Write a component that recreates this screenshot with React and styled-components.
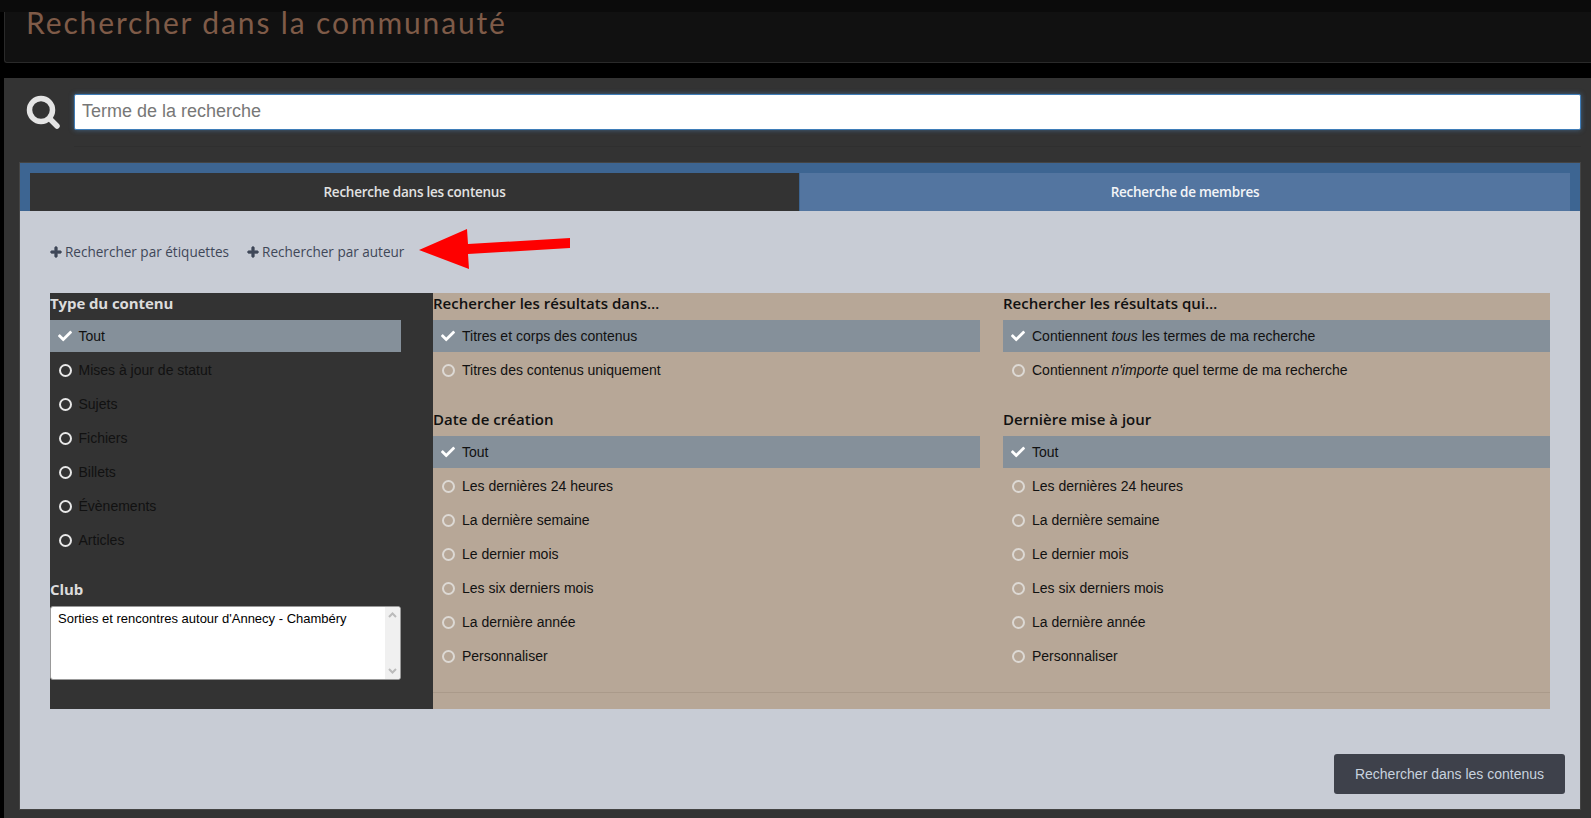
import React from 'react';
import styled, { createGlobalStyle } from 'styled-components';
import { FaCheck, FaPlus } from 'react-icons/fa';

const Global = createGlobalStyle`
  html, body { margin: 0; padding: 0; background: #000; height: 818px; overflow: hidden; }
  * { box-sizing: border-box; }
`;
const HEAD = `"Open Sans", "Noto Sans", sans-serif`;
const BODY = `"Liberation Sans", Arial, sans-serif`;

const TopBand = styled.div`height: 12px; background: #0b0b0b;`;
const HeaderPanel = styled.header`
  display: flow-root;
  margin-left: 4px; height: 51px; background: #111;
  border: 1px solid #2a2a2a; border-width: 0 0 1px 1px; border-bottom-left-radius: 3px;
`;
const Title = styled.h1`
  margin: -8px 0 0 21px; font: 400 30px/36px Lato, sans-serif; letter-spacing: 1.87px; color: #7f5b48;
`;
const Main = styled.main`
  margin: 15px 0 0 4px; background: #333; padding: 16px 11px 0 16px; height: 740px;
`;
const SearchRow = styled.div`display: flex; align-items: center; gap: 14px; padding-left: 6px; height: 36px;`;
const SearchIcon = styled.svg`width: 34px; height: 34px; flex: none; fill: none; stroke: #e4e4e4; stroke-width: 5.5; stroke-linecap: round;`;
const SearchInput = styled.input`
  flex: 1; height: 36px; padding: 0 7px 2px; margin-right: -1px; border: 1px solid #3f7db8; border-radius: 2px; background: #fff;
  font: 18px ${BODY}; box-shadow: 0 0 5px rgba(80,140,200,.55); outline: none;
  &::placeholder { color: #777; }
`;
const Divider = styled.div`margin: 16px -1px 16px 54px; height: 1px; background: #2f2f2f;`;
const BluePanel = styled.section`background: #3d6592; box-shadow: 0 0 0 1px #444;`;
const TabBar = styled.div`display: flex; padding: 10px 10px 0;`;
const Tab = styled.div`
  height: 38px; display: flex; align-items: center; justify-content: center;
  font: 600 13.5px ${HEAD}; letter-spacing: -.25px;
  flex: ${p => p.$active ? '0 0 769px' : '1'};
  color: ${p => p.$active ? '#e2e2e2' : '#f2f4f7'};
  background: ${p => p.$active ? '#333' : '#5375a0'};
  border-left: ${p => p.$active ? '0' : '1px solid #3d6592'};
`;
const Content = styled.div`position: relative; background: #c8ccd5; padding: 0 30px 15px; height: 598px;`;
const LinkRow = styled.div`display: flex; gap: 18px; height: 82px; padding-top: 32px; color: #3f4758; font: 13.55px ${HEAD};`;
const AddLink = styled.a`display: inline-flex; align-items: center; gap: 3px; height: 17px;`;
const PlusIcon = styled(FaPlus)`width: 12px; height: 12px; stroke: currentColor; stroke-width: 40;`;
const Arrow = styled.svg`position: absolute; left: 399px; top: 17px; width: 152px; height: 41px;`;
const Columns = styled.div`display: flex; height: 416px;`;
const DarkCol = styled.div`width: 383px; flex: none; padding-right: 32px; background: #333;`;
const TanCol = styled.div`
  flex: 1; background: #b7a797;
  display: grid; grid-template-columns: 547px 547px; justify-content: space-between; align-content: start;
`;
const TanStack = styled.div`display: flex; flex-direction: column;`;
const TanRule = styled.div`grid-column: 1 / 3; height: 1px; background: #aa9a8a; margin-top: 18px;`;
const Heading = styled.h3`
  margin: 0; height: 27px; font: ${p => p.$dark ? 700 : 600} 15px/21px ${HEAD}; letter-spacing: ${p => p.$dark ? '-.1px' : '.03px'};
  color: ${p => p.$dark ? '#dcdcdc' : '#111'};
  ${p => p.$gap ? 'margin-top: 21px;' : ''}
  ${p => p.$club ? 'margin-top: 19px; height: 31px; line-height: 28px;' : ''}
`;
const Row = styled.div`
  height: 32px; margin-bottom: 2px; display: flex; align-items: center; padding-left: 8px; gap: ${p => p.$dark ? '6.5px' : '7px'};
  font: 14px ${BODY}; color: #111;
  background: ${p => p.$on ? '#85909a' : 'transparent'};
`;
const IconSlot = styled.span`width: 14px; flex: none; display: flex; align-items: center; justify-content: center;`;
const CheckIcon = styled(FaCheck)`width: 14px; height: 14px; color: #fff;`;
const RadioIcon = styled.span`
  width: 13px; height: 13px; border-radius: 50%; border: 2.5px solid ${p => p.$dark ? '#e8e8e8' : '#ddd9d4'};
`;
const ListBox = styled.div`
  height: 74px; background: #fff; border: 1px solid #999; border-radius: 3px; display: flex; overflow: hidden;
`;
const ListText = styled.div`flex: 1; padding: 4px 7px; font: 13px/1.2 ${BODY}; color: #000;`;
const ScrollBar = styled.div`
  width: 15px; background: #f0f0f0; display: flex; flex-direction: column; justify-content: space-between; align-items: center; padding: 5px 0;
`;
const ScrollArrow = styled.svg`width: 9px; height: 6px; fill: none; stroke: #bbb; stroke-width: 2;`;
const Footer = styled.div`display: flex; justify-content: flex-end; margin: 45px -15px 0 0;`;
const Submit = styled.button`
  width: 231px; height: 40px; border: 0; border-radius: 3px; background: #3e414b; color: #c8d2de; font: 14px ${BODY};
`;

const Opt = ({ on, dark, children }) => (
  <Row $on={on} $dark={dark}>
    <IconSlot>{on ? <CheckIcon /> : <RadioIcon $dark={dark} />}</IconSlot>
    <span>{children}</span>
  </Row>
);
const dates = ['Les dernières 24 heures', 'La dernière semaine', 'Le dernier mois', 'Les six derniers mois', 'La dernière année', 'Personnaliser'];
const types = ['Mises à jour de statut', 'Sujets', 'Fichiers', 'Billets', 'Évènements', 'Articles'];

const DateGroup = ({ title }) => (
  <>
    <Heading $gap>{title}</Heading>
    <Opt on>Tout</Opt>
    {dates.map(d => <Opt key={d}>{d}</Opt>)}
  </>
);

export default function App() {
  return (
    <>
      <Global />
      <TopBand />
      <HeaderPanel><Title>Rechercher dans la communauté</Title></HeaderPanel>
      <Main>
        <SearchRow>
          <SearchIcon viewBox="0 0 34 34">
            <circle cx="15" cy="15" r="11.5" />
            <line x1="24" y1="24" x2="31" y2="31" />
          </SearchIcon>
          <SearchInput placeholder="Terme de la recherche" />
        </SearchRow>
        <Divider />
        <BluePanel>
          <TabBar>
            <Tab $active>Recherche dans les contenus</Tab>
            <Tab>Recherche de membres</Tab>
          </TabBar>
          <Content>
            <LinkRow>
              <AddLink><PlusIcon />Rechercher par étiquettes</AddLink>
              <AddLink><PlusIcon />Rechercher par auteur</AddLink>
            </LinkRow>
            <Arrow viewBox="0 0 152 41">
              <polygon fill="#fe0000" points="0,22 48,1 49,16 151,10 151,20 49,26 50,41" />
            </Arrow>
            <Columns>
              <DarkCol>
                <Heading $dark>Type du contenu</Heading>
                <Opt on dark>Tout</Opt>
                {types.map(t => <Opt key={t} dark>{t}</Opt>)}
                <Heading $dark $club>Club</Heading>
                <ListBox>
                  <ListText>Sorties et rencontres autour d'Annecy - Chambéry</ListText>
                  <ScrollBar>
                    <ScrollArrow viewBox="0 0 9 6"><path d="M1 5l3.5-3.5L8 5" /></ScrollArrow>
                    <ScrollArrow viewBox="0 0 9 6"><path d="M1 1l3.5 3.5L8 1" /></ScrollArrow>
                  </ScrollBar>
                </ListBox>
              </DarkCol>
              <TanCol>
                <TanStack>
                  <Heading>Rechercher les résultats dans…</Heading>
                  <Opt on>Titres et corps des contenus</Opt>
                  <Opt>Titres des contenus uniquement</Opt>
                  <DateGroup title="Date de création" />
                </TanStack>
                <TanStack>
                  <Heading>Rechercher les résultats qui…</Heading>
                  <Opt on>Contiennent <em>tous</em> les termes de ma recherche</Opt>
                  <Opt>Contiennent <em>n'importe</em> quel terme de ma recherche</Opt>
                  <DateGroup title="Dernière mise à jour" />
                </TanStack>
                <TanRule />
              </TanCol>
            </Columns>
            <Footer><Submit>Rechercher dans les contenus</Submit></Footer>
          </Content>
        </BluePanel>
      </Main>
    </>
  );
}
